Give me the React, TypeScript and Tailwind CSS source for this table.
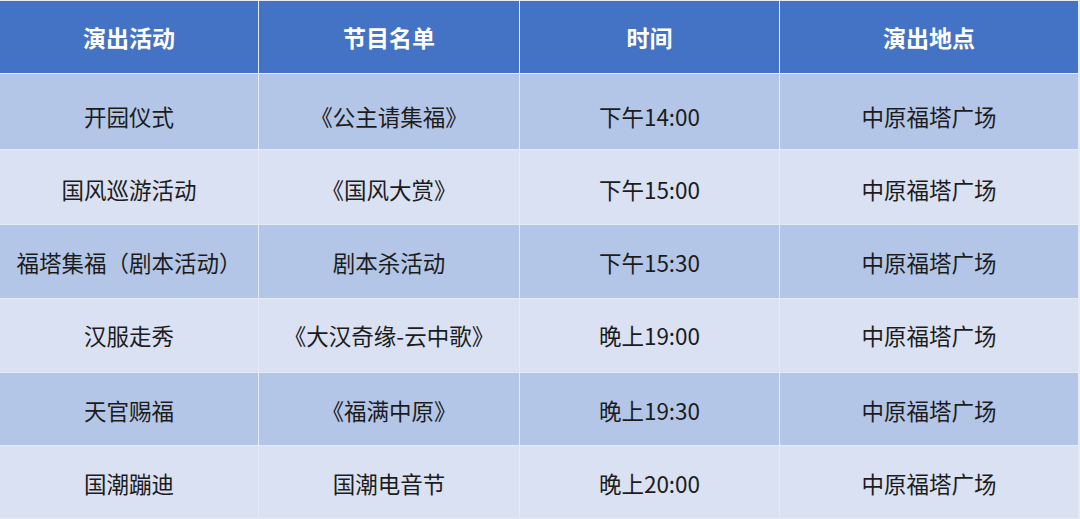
import React from "react";

const headers = ["演出活动", "节目名单", "时间", "演出地点"];
const rows = [
  ["开园仪式", "《公主请集福》", "下午14:00", "中原福塔广场"],
  ["国风巡游活动", "《国风大赏》", "下午15:00", "中原福塔广场"],
  ["福塔集福（剧本活动）", "剧本杀活动", "下午15:30", "中原福塔广场"],
  ["汉服走秀", "《大汉奇缘-云中歌》", "晚上19:00", "中原福塔广场"],
  ["天官赐福", "《福满中原》", "晚上19:30", "中原福塔广场"],
  ["国潮蹦迪", "国潮电音节", "晚上20:00", "中原福塔广场"],
];

const pads = ["pt-[11px]", "pt-[5px]", "pt-[3px]", "pt-[1px]", "pt-[3px]", "pt-[4px]"];

export default function App() {
  return (
    <div
      className="w-[1080px] h-[519px] bg-[#e4eaf6] pt-px pr-[2px] overflow-hidden"
      style={{ fontFamily: '"Noto Sans CJK SC", "Noto Sans", sans-serif' }}
    >
      <div className="grid grid-cols-[258px_260px_259px_298px] grid-rows-[72px_75px_74px_73px_73px_72px_72px] gap-px">
        {headers.map((h) => (
          <div
            key={h}
            className="bg-[#4472c4] text-white font-bold text-[23px] flex items-center justify-center"
          >
            {h}
          </div>
        ))}
        {rows.map((r, i) =>
          r.map((c, j) => (
            <div
              key={i + "-" + j}
              className={
                (i % 2 === 0 ? "bg-[#b4c6e7]" : "bg-[#d9e1f2]") +
                " " +
                pads[i] +
                " text-[#1c1c1c] text-[22.5px] flex items-center justify-center whitespace-nowrap"
              }
            >
              {c}
            </div>
          ))
        )}
      </div>
    </div>
  );
}
